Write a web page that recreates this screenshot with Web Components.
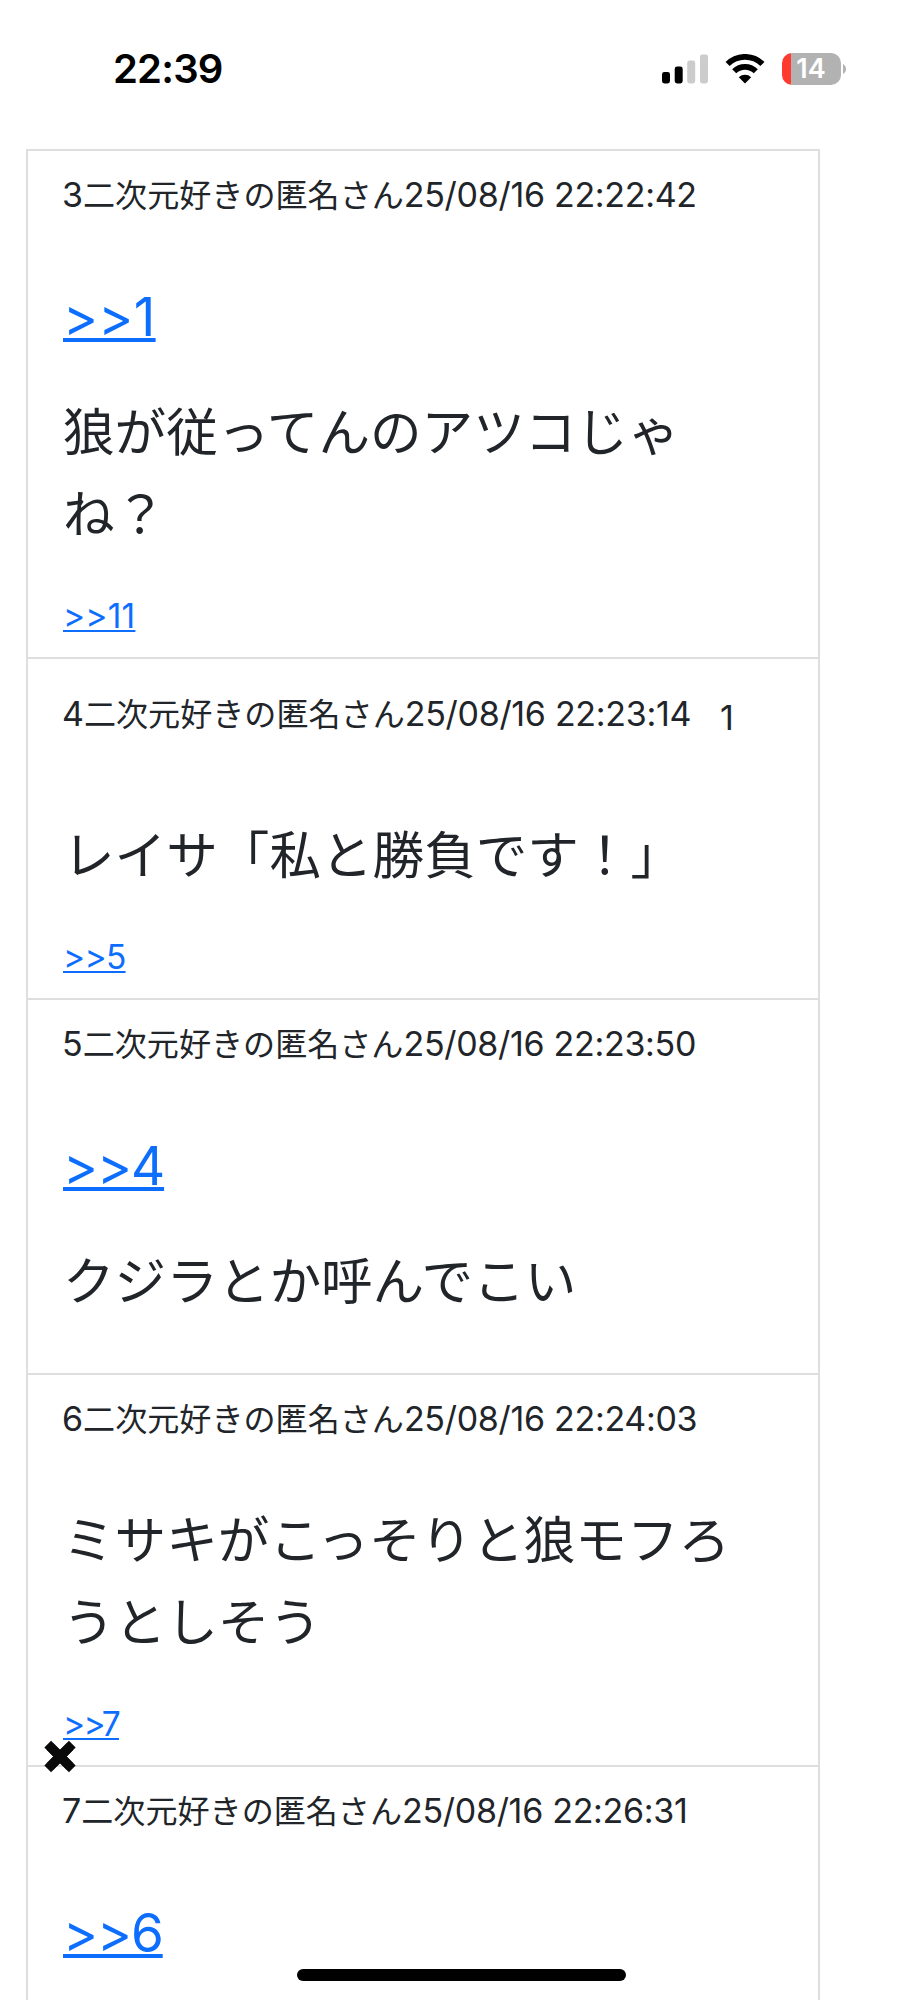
<!DOCTYPE html>
<html lang="ja">
<head>
<meta charset="UTF-8">
<title>スレッド</title>
<style>
    body {
        margin: 0;
        height: 2000px;
        overflow: hidden;
        position: relative;
        background: #fff;
        color: #212529;
        font-family: Inter, "Noto Sans CJK JP", sans-serif;
    }
</style>
</head>
<body>
<status-bar time="22:39" battery="14"></status-bar>
<thread-list>
    <res-item number="3" date="25/08/16 22:22:42">
        <anchor-link style="--track: 0.3px">&gt;&gt;1</anchor-link>
        <res-text>狼が従ってんのアツコじゃ<br>ね？</res-text>
        <anchor-link slot="reply" small style="--track: 0.2px">&gt;&gt;11</anchor-link>
    </res-item>
    <res-item number="4" date="25/08/16 22:23:14" likes="1">
        <res-text>レイサ「私と勝負です！」</res-text>
        <anchor-link slot="reply" small style="--track: -0.7px">&gt;&gt;5</anchor-link>
    </res-item>
    <res-item number="5" date="25/08/16 22:23:50">
        <anchor-link>&gt;&gt;4</anchor-link>
        <res-text>クジラとか呼んでこい</res-text>
    </res-item>
    <res-item number="6" date="25/08/16 22:24:03">
        <res-text>ミサキがこっそりと狼モフろ<br>うとしそう</res-text>
        <anchor-link slot="reply" small style="--track: -1.6px">&gt;&gt;7</anchor-link>
    </res-item>
    <res-item number="7" date="25/08/16 22:26:31">
        <anchor-link>&gt;&gt;6</anchor-link>
    </res-item>
</thread-list>
<close-button></close-button>
<home-indicator></home-indicator>

<script>
// status-bar
class StatusBar extends HTMLElement {
    constructor() {
        super();
        this.attachShadow({ mode: 'open' });
        this.shadowRoot.innerHTML = `
            <style>
                :host {
                    display: flex;
                    justify-content: space-between;
                    align-items: center;
                    box-sizing: border-box;
                    height: 149px;
                    padding: 0 77px 12px 113px;
                    color: #000;
                }
                .time {
                    font-size: 40px;
                    font-weight: 600;
                    letter-spacing: -0.8px;
                }
                .icons {
                    display: flex;
                    align-items: center;
                }
                .signal { margin-right: 17px; }
                .wifi { margin-right: 17px; }
                .battery {
                    box-sizing: border-box;
                    width: 59px;
                    height: 32px;
                    border-radius: 10px;
                    background: linear-gradient(to right, #ff3b30 9px, #b2b2b2 9px);
                    color: #fff;
                    font-size: 27px;
                    font-weight: 600;
                    line-height: 32px;
                    text-align: center;
                    padding-right: 1px;
                }
                .cap { margin-left: 2px; }
                svg { display: block; }
            </style>
            <div class="time">${this.getAttribute('time')}</div>
            <div class="icons">
                <svg class="signal" width="46" height="30" viewBox="0 0 46 30">
                    <rect x="0" y="18" width="8" height="11.5" rx="2.4"/>
                    <rect x="12.7" y="12.5" width="8" height="17" rx="2.4"/>
                    <rect x="25.2" y="6.5" width="8" height="23" rx="2.4" fill="#ccc"/>
                    <rect x="38" y="0.5" width="8" height="29" rx="2.4" fill="#ccc"/>
                </svg>
                <svg class="wifi" width="40" height="30" viewBox="0 0 40 30">
                    <path d="M2.6 10a24.8 24.8 0 0 1 34.8 0M9.2 17.2a15.4 15.4 0 0 1 21.6 0" fill="none" stroke="#000" stroke-width="5.8"/>
                    <path d="M13.8 23.2a9.2 9.2 0 0 1 12.4 0L20 29.5z"/>
                </svg>
                <div class="battery">${this.getAttribute('battery')}</div>
                <svg class="cap" width="3" height="10" viewBox="0 0 3 10">
                    <path d="M0 0C4 2 4 8 0 10z" fill="#b2b2b2"/>
                </svg>
            </div>
        `;
    }
}
customElements.define('status-bar', StatusBar);

// thread-list
class ThreadList extends HTMLElement {
    constructor() {
        super();
        this.attachShadow({ mode: 'open' });
        this.shadowRoot.innerHTML = `
            <style>
                :host {
                    display: block;
                    box-sizing: border-box;
                    width: 794px;
                    height: 1900px;
                    margin-left: 26px;
                    border: solid #dedede;
                    border-width: 0 2px;
                }
            </style>
            <slot></slot>
        `;
    }
}
customElements.define('thread-list', ThreadList);

// res-item
class ResItem extends HTMLElement {
    constructor() {
        super();
        this.attachShadow({ mode: 'open' });
        const likes = this.getAttribute('likes');
        this.shadowRoot.innerHTML = `
            <style>
                :host {
                    display: block;
                    border-top: 2px solid #dedede;
                    padding: 22px 35px 20px;
                }
                :host([likes]) { padding-top: 33px; }
                header {
                    display: flex;
                    align-items: baseline;
                    height: 46px;
                    line-height: 44px;
                    font-size: 34px;
                    white-space: pre;
                    margin-left: -1px;
                }
                .name { font-size: 32.1px; }
                .date { letter-spacing: -0.3px; }
                .likes {
                    margin-left: 29px;
                    position: relative;
                    top: 4px;
                }
                .body {
                    display: flex;
                    flex-direction: column;
                    gap: 31px;
                    padding-top: 53px;
                }
                :host([likes]) .body { padding-top: 73px; }
                .reply { margin-top: 41px; }
                .tail { height: 34px; }
            </style>
            <header><span class="num">${this.getAttribute('number')}</span><span class="name">二次元好きの匿名さん</span><span class="date">${this.getAttribute('date')}</span>${likes ? `<span class="likes">${likes}</span>` : ''}</header>
            <div class="body"><slot></slot></div>
            ${this.querySelector('[slot=reply]') ? '<div class="reply"><slot name="reply"></slot></div>' : '<div class="tail"></div>'}
        `;
    }
}
customElements.define('res-item', ResItem);

// res-text
class ResText extends HTMLElement {
    constructor() {
        super();
        this.attachShadow({ mode: 'open' });
        this.shadowRoot.innerHTML = `
            <style>
                :host {
                    display: block;
                    font-family: "Noto Sans CJK JP", sans-serif;
                    font-size: 51.6px;
                    line-height: 82px;
                    white-space: nowrap;
                }
            </style>
            <slot></slot>
        `;
    }
}
customElements.define('res-text', ResText);

// anchor-link
class AnchorLink extends HTMLElement {
    constructor() {
        super();
        this.attachShadow({ mode: 'open' });
        this.shadowRoot.innerHTML = `
            <style>
                :host {
                    display: block;
                    height: 80px;
                    padding-top: 5px;
                    font-size: 53px;
                    line-height: 80px;
                    letter-spacing: var(--track, -1.1px);
                }
                :host([small]) {
                    height: 43px;
                    padding-top: 1px;
                    font-size: 33.5px;
                    line-height: 44px;
                }
                a {
                    color: #0d6efd;
                    text-decoration: underline;
                    text-decoration-thickness: 4px;
                    text-underline-offset: 2px;
                    text-decoration-skip-ink: none;
                }
                :host([small]) a {
                    text-decoration-thickness: 2px;
                    text-underline-offset: 2px;
                }
            </style>
            <a><slot></slot></a>
        `;
    }
}
customElements.define('anchor-link', AnchorLink);

// close-button, floats over the list
class CloseButton extends HTMLElement {
    constructor() {
        super();
        this.attachShadow({ mode: 'open' });
        this.shadowRoot.innerHTML = `
            <style>
                :host {
                    position: absolute;
                    left: 44px;
                    top: 1740px;
                }
                svg { display: block; }
            </style>
            <svg width="32" height="33" viewBox="0 0 32 33">
                <path d="M6 6.5L26 26.5M26 6.5L6 26.5" stroke="#0a0a0a" stroke-width="9.5"/>
                <path d="M3.7 4.2L28.3 28.8M28.3 4.2L3.7 28.8" stroke="#0a0a0a" stroke-width="9.5"/>
            </svg>
        `;
    }
}
customElements.define('close-button', CloseButton);

// home-indicator
class HomeIndicator extends HTMLElement {
    constructor() {
        super();
        this.attachShadow({ mode: 'open' });
        this.shadowRoot.innerHTML = `
            <style>
                :host {
                    position: absolute;
                    left: 297px;
                    top: 1969px;
                    width: 329px;
                    height: 12px;
                    border-radius: 6px;
                    background: #000;
                }
            </style>
        `;
    }
}
customElements.define('home-indicator', HomeIndicator);
</script>
</body>
</html>
